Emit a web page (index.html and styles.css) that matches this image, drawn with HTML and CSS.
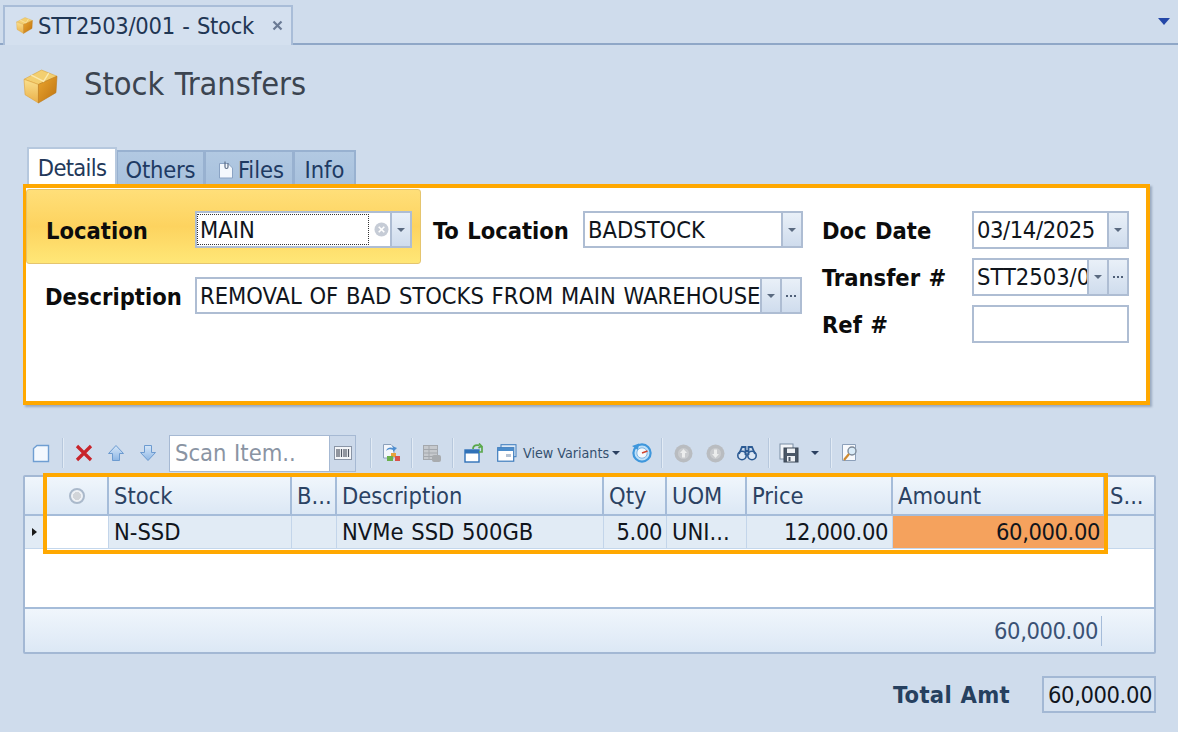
FILE: index.html
```html
<!DOCTYPE html>
<html lang="en">
<head>
<meta charset="utf-8">
<title>STT2503/001 - Stock</title>
<link rel="stylesheet" href="styles.css">
</head>
<body>
<svg class="defs" width="0" height="0" aria-hidden="true">
  <defs>
    <linearGradient id="boxL" x1="0" y1="0" x2="0" y2="1"><stop offset="0" stop-color="#fae08e"/><stop offset="1" stop-color="#eab049"/></linearGradient>
    <linearGradient id="boxR" x1="0" y1="0" x2="1" y2="1"><stop offset="0" stop-color="#eba62f"/><stop offset="1" stop-color="#bd7210"/></linearGradient>
    <linearGradient id="arrowBlue" x1="0" y1="0" x2="0" y2="1"><stop offset="0" stop-color="#d6e7f9"/><stop offset="1" stop-color="#8db6e4"/></linearGradient>
    <symbol id="box" viewBox="0 0 34 34">
      <path d="M1 10 L18 1 L33 7 L15 15 Z" fill="#f3cf70" stroke="#dba53d" stroke-width=".6" stroke-linejoin="round"/>
      <path d="M1 10 L15 15 L15 33 L2 25 Z" fill="url(#boxL)" stroke="#e0a23a" stroke-width=".6" stroke-linejoin="round"/>
      <path d="M15 15 L33 7 L32 23 L15 33 Z" fill="url(#boxR)" stroke="#bd7a1c" stroke-width=".6" stroke-linejoin="round"/>
      <path d="M8 6 L20 12 L25 4" stroke="#fbeab0" stroke-width="1.3" fill="none"/>
    </symbol>
  </defs>
</svg>

<header class="doc-strip">
  <div class="doc-tab">
    <svg class="doc-tab-icon" width="17" height="17"><use href="#box"/></svg>
    <span class="doc-tab-title">STT2503/001 - Stock</span>
    <svg class="doc-tab-close" width="11" height="11" viewBox="0 0 11 11"><path d="M1.5 1.5 L9.5 9.5 M9.5 1.5 L1.5 9.5" stroke="#6a7a94" stroke-width="2.2"/></svg>
  </div>
  <span class="strip-menu"></span>
</header>

<main class="page">
  <div class="title-row">
    <svg class="title-icon" width="35" height="35"><use href="#box"/></svg>
    <h1 class="title">Stock Transfers</h1>
  </div>

  <nav class="sub-tabs">
    <span class="sub-tab sub-tab-active">Details</span>
    <span class="sub-tab sub-tab-others">Others</span>
    <span class="sub-tab sub-tab-files">
      <svg width="16" height="19" viewBox="0 0 16 19"><path d="M1.5 3.5 H10 L14.5 8 V18 H1.5 Z" fill="#f4f8fd" stroke="#8aa3c4"/><path d="M7 1.5 V7 a1.5 1.5 0 0 0 3 0 V3" fill="none" stroke="#5e6f88" stroke-width="1.2"/></svg>
      Files
    </span>
    <span class="sub-tab sub-tab-info">Info</span>
  </nav>

  <section class="form-panel">
    <div class="form-left">
      <div class="form-row-top">
        <div class="focus-band">
          <label class="form-label label-loc">Location</label>
          <div class="field field-location">
            <span class="field-text field-focused">MAIN</span>
            <svg class="clear-icon" width="15" height="15" viewBox="0 0 15 15"><circle cx="7.5" cy="7.5" r="7" fill="#c6ccd6"/><path d="M4.7 4.7 L10.3 10.3 M10.3 4.7 L4.7 10.3" stroke="#fff" stroke-width="1.6"/></svg>
            <span class="field-btn"><i class="caret"></i></span>
          </div>
        </div>
        <label class="form-label label-to">To Location</label>
        <div class="field field-to">
          <span class="field-text">BADSTOCK</span>
          <span class="field-btn"><i class="caret"></i></span>
        </div>
      </div>
      <div class="form-row-desc">
        <label class="form-label label-desc">Description</label>
        <div class="field field-desc">
          <span class="field-text">REMOVAL OF BAD STOCKS FROM MAIN WAREHOUSE</span>
          <span class="field-btn"><i class="caret"></i></span>
          <span class="field-btn field-btn-dots"><i class="dots"></i></span>
        </div>
      </div>
    </div>
    <div class="form-right">
      <label class="form-label">Doc Date</label>
      <div class="field">
        <span class="field-text field-date">03/14/2025</span>
        <span class="field-btn"><i class="caret"></i></span>
      </div>
      <label class="form-label">Transfer #</label>
      <div class="field">
        <span class="field-text">STT2503/001</span>
        <span class="field-btn"><i class="caret"></i></span>
        <span class="field-btn field-btn-dots"><i class="dots"></i></span>
      </div>
      <label class="form-label">Ref #</label>
      <div class="field"></div>
    </div>
  </section>

  <div class="toolbar">
    <span class="tb tb-new"><svg width="18" height="19" viewBox="0 0 18 19"><path d="M1.5 4.5 L5 1.5 H16.5 V17.5 H1.5 Z" fill="#f3f8fe" stroke="#6f9ed2" stroke-width="1.4"/></svg></span>
    <i class="sep sep-a"></i>
    <span class="tb"><svg width="20" height="20" viewBox="0 0 20 20"><path d="M3 3 L17 17 M17 3 L3 17" stroke="#c8242b" stroke-width="3.2"/></svg></span>
    <span class="tb tb-up"><svg width="18" height="18" viewBox="0 0 18 18"><path d="M9 1.5 L16.5 9.5 H12.5 V16.5 H5.5 V9.5 H1.5 Z" fill="url(#arrowBlue)" stroke="#6c9bd0"/></svg></span>
    <span class="tb tb-down"><svg width="18" height="18" viewBox="0 0 18 18"><path d="M9 16.5 L16.5 8.5 H12.5 V1.5 H5.5 V8.5 H1.5 Z" fill="url(#arrowBlue)" stroke="#6c9bd0"/></svg></span>
    <div class="scan">
      <span class="scan-text">Scan Item..</span>
      <span class="scan-btn"><svg width="18" height="14" viewBox="0 0 18 14"><rect x=".5" y=".5" width="17" height="13" fill="#f4f6f9" stroke="#8a95a6"/><path d="M3 3 V11 M5 3 V11 M7.5 3 V11 M10 3 V11 M12 3 V11 M14.5 3 V11" stroke="#4f5663" stroke-width="1.2"/></svg></span>
    </div>
    <i class="sep sep-b"></i>
    <span class="tb tb-sm"><svg width="20" height="20" viewBox="0 0 20 20"><path d="M2.5 1.5 H10 L13 4.5 V15 H2.5 Z" fill="#f3f6fb" stroke="#8ca0ba"/><path d="M5 8 C6 4 10 4 12 5 L11 3 L16 5 L12 9 L12 7 C10 6 7 6 5 8Z" fill="#4e8ed0"/><rect x="10" y="10" width="5" height="4" fill="#e8a23a"/><rect x="14" y="13" width="5" height="5" fill="#d9534a"/><rect x="6" y="13" width="6" height="5" fill="#6ab04c"/></svg></span>
    <i class="sep sep-c"></i>
    <span class="tb tb-sm"><svg width="20" height="20" viewBox="0 0 20 20"><rect x="1.5" y="2.5" width="14" height="14" fill="#c6c9cd" stroke="#a4a8ad"/><path d="M2 6.5 H15 M2 10 H15 M2 13.5 H15 M7 3 V16" stroke="#a4a8ad"/><rect x="10" y="12" width="9" height="7" rx="2" fill="#a8abae"/></svg></span>
    <i class="sep sep-d"></i>
    <span class="tb tb-sm"><svg width="20" height="20" viewBox="0 0 20 20"><rect x="1" y="7" width="14" height="12" fill="#fff" stroke="#2f71b8" stroke-width="1.4"/><rect x="1" y="7" width="14" height="3.5" fill="#2f71b8"/><path d="M9 6 C9 2 13 1.5 15.5 2.5 M15 0.5 L17.5 3 L14.5 5 M18 3 V9 H15" fill="none" stroke="#5aa84a" stroke-width="1.7"/></svg></span>
    <span class="tb-variants">
      <svg width="20" height="18" viewBox="0 0 20 18"><rect x="4" y=".7" width="15" height="12" fill="#dbe8f6" stroke="#3e7cbd"/><rect x=".7" y="3.7" width="16" height="13.5" fill="#fff" stroke="#3e7cbd" stroke-width="1.2"/><rect x="1" y="4" width="15.4" height="3" fill="#4b8ccb"/><rect x="9" y="10" width="5" height="3" fill="#b5c3d4"/></svg>
      <span class="tb-label">View Variants</span>
      <i class="caret caret-dark"></i>
    </span>
    <span class="tb tb-gauge"><svg width="22" height="22" viewBox="0 0 22 22"><circle cx="11" cy="11" r="8.6" fill="#bfe0f8" stroke="#3f97dc" stroke-width="2.2"/><circle cx="11" cy="11" r="5.2" fill="#f4f8fc" stroke="#7fb4e2"/><path d="M11 11 L16.5 9" stroke="#d0442f" stroke-width="1.5"/><path d="M1 4 L8 1.5 L7 8 Z" fill="#3f97dc"/></svg></span>
    <i class="sep sep-e"></i>
    <span class="tb tb-round"><svg width="19" height="19" viewBox="0 0 19 19"><circle cx="9.5" cy="9.5" r="9" fill="#b9bcc0"/><circle cx="9.5" cy="9.5" r="5.5" fill="#c9cbce"/><path d="M9.5 5 L13 9 H11 V13.5 H8 V9 H6 Z" fill="#eceded"/></svg></span>
    <span class="tb tb-round"><svg width="19" height="19" viewBox="0 0 19 19"><circle cx="9.5" cy="9.5" r="9" fill="#b9bcc0"/><circle cx="9.5" cy="9.5" r="5.5" fill="#c9cbce"/><path d="M9.5 14 L13 10 H11 V5.5 H8 V10 H6 Z" fill="#eceded"/></svg></span>
    <span class="tb tb-bino"><svg width="20" height="16" viewBox="0 0 20 16"><circle cx="5" cy="10.5" r="4.2" fill="#dce7f4" stroke="#2c5b94" stroke-width="1.6"/><circle cx="15" cy="10.5" r="4.2" fill="#dce7f4" stroke="#2c5b94" stroke-width="1.6"/><path d="M2 9 L5 2 H8.5 V10 M18 9 L15 2 H11.5 V10 M8 6 H12" fill="none" stroke="#2c5b94" stroke-width="1.8"/></svg></span>
    <i class="sep sep-f"></i>
    <span class="tb tb-sm"><svg width="20" height="20" viewBox="0 0 20 20"><rect x="1" y="1" width="13" height="15" fill="#f2f5f9" stroke="#7b8da3"/><rect x="5" y="5" width="14" height="14" fill="#4a5767" stroke="#3b4654"/><rect x="8" y="5.5" width="8" height="4.5" fill="#eef1f5"/><rect x="8" y="13" width="8" height="5.5" fill="#eef1f5"/><rect x="9.5" y="14" width="2" height="4" fill="#4a5767"/></svg></span>
    <i class="caret caret-dark caret-save"></i>
    <i class="sep sep-g"></i>
    <span class="tb tb-sm"><svg width="20" height="20" viewBox="0 0 20 20"><path d="M2.5 1.5 H15.5 V17.5 H2.5 Z" fill="#f7f9fc" stroke="#8ca0ba"/><circle cx="12" cy="8" r="4" fill="#d9ebf8" stroke="#7d8a99" stroke-width="1.4"/><path d="M9 11 L4 17" stroke="#cf8a2f" stroke-width="2.2"/></svg></span>
  </div>

  <section class="grid-wrap">
    <div class="grid">
      <div class="grid-row grid-head">
        <div class="c c-ind"></div>
        <div class="c c-chk"><span class="radio"></span></div>
        <div class="c c-stock">Stock</div>
        <div class="c c-b">B...</div>
        <div class="c c-desc">Description</div>
        <div class="c c-qty">Qty</div>
        <div class="c c-uom">UOM</div>
        <div class="c c-price">Price</div>
        <div class="c c-amt">Amount</div>
        <div class="c c-s">S...</div>
      </div>
      <div class="grid-row grid-data">
        <div class="c c-ind"><i class="row-mark"></i></div>
        <div class="c c-chk c-white"></div>
        <div class="c c-stock">N-SSD</div>
        <div class="c c-b"></div>
        <div class="c c-desc">NVMe SSD 500GB</div>
        <div class="c c-qty num">5.00</div>
        <div class="c c-uom">UNI...</div>
        <div class="c c-price num">12,000.00</div>
        <div class="c c-amt num c-orange">60,000.00</div>
        <div class="c c-s c-tail"></div>
      </div>
      <div class="grid-empty"></div>
      <div class="grid-foot">
        <span class="foot-value num">60,000.00</span>
        <i class="foot-rule"></i>
      </div>
    </div>
    <div class="highlight"></div>
  </section>

  <div class="total-row">
    <span class="total-label">Total Amt</span>
    <span class="total-value num">60,000.00</span>
  </div>
</main>
</body>
</html>
```

FILE: styles.css
```css
* { box-sizing: border-box; }
html, body { margin: 0; padding: 0; }
body {
  width: 1178px;
  height: 732px;
  overflow: hidden;
  background: #cfdcec;
  font-family: "DejaVu Sans Condensed", "DejaVu Sans", "Noto Sans", sans-serif;
  font-stretch: condensed;
  font-size: 23.5px;
  word-spacing: 1px;
  color: #111;
}
.defs { position: absolute; }

/* document tab strip */
.doc-strip {
  height: 45px;
  padding: 5px 0 0 3px;
  border-bottom: 2px solid #8fa7c7;
  display: flex;
  background: #cfdcec;
  position: relative;
}
.doc-tab {
  width: 290px;
  height: 40px;
  display: flex;
  align-items: center;
  padding-left: 11px;
  border: 2px solid #a9bdd8;
  border-bottom: none;
  background: #d4e0ef;
  color: #1f3654;
}
.doc-tab-icon { flex: none; margin-top: -2px; }
.doc-tab-title { margin-left: 5px; white-space: nowrap; letter-spacing: -.3px; }
.doc-tab-close { margin-left: auto; margin-right: 8px; margin-top: -1px; flex: none; }
.strip-menu {
  position: absolute;
  right: 8px;
  top: 18px;
  border: 6px solid transparent;
  border-top: 7px solid #2447a8;
  border-bottom: none;
}

.page { padding: 0 22px 0 23px; }

/* title */
.title-row {
  height: 80px;
  display: flex;
  align-items: center;
  padding-bottom: 3px;
}
.title-icon { flex: none; margin-top: 5px; }
.title {
  margin: 0 0 0 26px;
  font-size: 32.3px;
  font-weight: 400;
  color: #3b4450;
  white-space: nowrap;
}

/* sub tabs */
.sub-tabs {
  height: 38px;
  margin-top: 22px;
  padding-left: 4px;
  display: flex;
  align-items: flex-end;
  color: #1e3a63;
}
.sub-tab {
  height: 35px;
  display: flex;
  align-items: center;
  justify-content: center;
  gap: 4px;
  padding-top: 2px;
  background: linear-gradient(#b2c9e2, #a8c1dd);
  border: 2px solid #98b1d0;
  border-left-width: 1px;
  border-bottom: none;
  white-space: nowrap;
}
.sub-tab-active {
  width: 90px;
  height: 38px;
  background: #fff;
  border: 2px solid #b6c8de;
  border-bottom: none;
  color: #23395a;
  letter-spacing: -.7px;
}
.sub-tab-others { width: 88px; letter-spacing: -.2px; }
.sub-tab-files { width: 89px; padding-left: 4px; }
.sub-tab-info { width: 62px; }

/* form */
.form-panel {
  width: 1127px;
  height: 221px;
  margin-top: -1px;
  position: relative;
  display: flex;
  background: #fff;
  border-style: solid;
  border-color: #ffa800;
  border-width: 4px 4px 4px 3px;
  box-shadow: 2px 2px 2px rgba(90, 110, 140, .45);
}
.form-left { width: 776px; flex: none; }
.form-row-top { display: flex; align-items: flex-start; height: 76px; padding-top: 1px; }
.focus-band {
  width: 395px;
  height: 75px;
  flex: none;
  display: flex;
  align-items: flex-start;
  padding: 21px 0 0 19px;
  border: 1px solid #e5c56e;
  border-radius: 3px;
  background: linear-gradient(#ffdf79, #fdd35f 50%, #ffe777);
}
.form-label { font-weight: 700; white-space: nowrap; color: #0c0c0c; }
.label-loc { width: 149px; flex: none; margin-top: 6px; }
.label-to { margin: 28px 0 0 12px; width: 150px; flex: none; }
.label-desc { width: 150px; flex: none; margin-left: 19px; padding-top: 2px; }
.form-row-desc { display: flex; align-items: center; margin-top: 13px; }

.field {
  height: 38px;
  display: flex;
  align-items: stretch;
  border: 2px solid #aebdd3;
  background: #fff;
  min-width: 0;
}
.field-location { width: 217px; height: 37px; flex: none; }
.field-to { width: 220px; height: 37px; flex: none; margin-top: 22px; }
.field-desc { width: 607px; height: 37px; flex: none; }
.field-text {
  flex: 1;
  min-width: 0;
  overflow: hidden;
  white-space: nowrap;
  padding: 0 3px;
  line-height: 35px;
  color: #10151c;
}
.field-date { letter-spacing: -.4px; }
.field-focused {
  outline: 1px dotted #333;
  outline-offset: -1px;
  margin: 1px 0;
  line-height: 33px;
  padding-left: 3px;
}
.clear-icon { align-self: center; flex: none; margin: 0 1px 0 5px; }
.field-btn {
  width: 20px;
  flex: none;
  display: flex;
  align-items: center;
  justify-content: center;
  border-left: 2px solid #aebdd3;
  background: linear-gradient(#e9f0f8, #cfdced);
}
.caret {
  display: block;
  border: 4px solid transparent;
  border-top: 4px solid #5a6a80;
  border-bottom: none;
}
.caret-dark { border-top-color: #2c4060; }
.dots {
  display: block;
  width: 10px;
  height: 2px;
  background: radial-gradient(circle at 1px 1px, #4f5f78 1px, transparent 1px) 0 0 / 4px 2px repeat-x;
}

.form-right {
  flex: 1;
  margin-left: 20px;
  padding-top: 23px;
  display: grid;
  grid-template-columns: 150px 157px;
  grid-auto-rows: 38px;
  row-gap: 9px;
  align-items: center;
}
.form-right .form-label { padding-top: 2px; }

/* toolbar */
.toolbar {
  height: 38px;
  margin-top: 29px;
  padding-left: 5px;
  display: flex;
  align-items: center;
}
.tb {
  width: 26px;
  height: 38px;
  flex: none;
  display: flex;
  align-items: center;
  justify-content: center;
}
.tb-up { margin-left: 6px; }
.tb-down { margin-left: 6px; }
.tb-sm { width: 20px; }
.tb-gauge { width: 24px; margin-left: 10px; }
.tb-round { width: 24px; margin-right: 8px; }
.tb-bino { width: 24px; margin-left: 0; }
.sep {
  display: block;
  width: 1px;
  height: 30px;
  flex: none;
  background: #b7c8dd;
  box-shadow: 1px 0 0 #e2ebf5;
}
.sep-a { margin: 0 8px; width: 1px; }
.sep-b { margin: 0 10px 0 14px; }
.sep-c { margin: 0 10px 0 10px; }
.sep-d { margin: 0 11px 0 10px; }
.sep-e { margin: 0 9px 0 7px; }
.sep-f { margin: 0 10px 0 9px; }
.sep-g { margin: 0 9px 0 11px; }
.caret-save { margin-left: 12px; }

.scan {
  width: 187px;
  height: 37px;
  margin-left: 8px;
  display: flex;
  flex: none;
  border: 1px solid #a6b9d3;
  background: #fff;
}
.scan-text { flex: 1; padding-left: 5px; line-height: 35px; color: #8a94a3; white-space: nowrap; }
.scan-btn {
  width: 26px;
  display: flex;
  align-items: center;
  justify-content: center;
  border-left: 1px solid #a6b9d3;
  background: #ccd9ea;
}
.tb-variants {
  display: flex;
  align-items: center;
  margin-left: 13px;
  flex: none;
  color: #34506f;
}
.tb-label { margin: 0 3px 0 6px; font-size: 14.2px; word-spacing: 0; white-space: nowrap; }

/* grid */
.grid-wrap { position: relative; margin-top: 3px; width: 1133px; }
.grid {
  height: 179px;
  border: 2px solid #a3b8d4;
  border-radius: 2px;
  background: #fff;
  overflow: hidden;
}
.grid-row { display: flex; }
.grid-head {
  height: 39px;
  background: linear-gradient(#f0f6fc, #dce8f5);
  border-bottom: 2px solid #a5bcd9;
  color: #2b4263;
}
.grid-data {
  height: 33px;
  background: #e1ebf5;
  border-bottom: 1px solid #c4d7ec;
  color: #10151c;
}
.c {
  flex: none;
  display: flex;
  align-items: center;
  padding: 0 4px 0 5px;
  border-right: 1px solid #c3d5ea;
  white-space: nowrap;
  overflow: hidden;
}
.grid-head .c { border-right: 2px solid #a5bcd9; }
.c-ind { width: 20px; padding: 0 0 0 7px; }
.c-chk { width: 64px; justify-content: center; }
.c-stock { width: 183px; }
.c-b { width: 45px; }
.c-desc { width: 267px; }
.c-qty { width: 63px; }
.c-uom { width: 80px; }
.c-price { width: 146px; }
.c-amt { width: 212px; }
.c-s { flex: 1; border-right: none; }
.grid-head .c-s { border-right: none; }
.num { justify-content: flex-end; letter-spacing: -.4px; }
.c-white { background: #fff; }
.c-orange { background: #f5a25d; }
.c-tail { background: #e1ebf5; }
.radio {
  width: 16px;
  height: 16px;
  border-radius: 50%;
  border: 2px solid #aab9cb;
  background: radial-gradient(#d2d5d9 45%, #eef1f5 50%);
}
.row-mark {
  display: block;
  border: 4px solid transparent;
  border-left: 5px solid #1a1a1a;
  border-right: none;
}
.grid-empty { height: 60px; border-bottom: 2px solid #a5bcd9; }
.grid-foot {
  height: 43px;
  display: flex;
  align-items: center;
  justify-content: flex-end;
  padding-right: 52px;
  background: linear-gradient(#f0f6fc, #dce8f5);
  color: #3a5275;
}
.foot-rule {
  display: block;
  width: 1px;
  height: 30px;
  margin-left: 3px;
  background: #a5bcd9;
}
.highlight {
  position: absolute;
  left: 20px;
  top: -2px;
  width: 1065px;
  height: 81px;
  border: 4px solid #ffa800;
  pointer-events: none;
}

/* total */
.total-row {
  display: flex;
  justify-content: flex-end;
  align-items: center;
  width: 1133px;
  margin-top: 22px;
}
.total-label { font-weight: 700; color: #26405f; margin-right: 32px; letter-spacing: .3px; }
.total-value {
  width: 114px;
  height: 37px;
  display: flex;
  align-items: center;
  justify-content: flex-end;
  padding-right: 2px;
  border: 2px solid #a3b8d4;
  background: #d6e2f0;
  color: #10151c;
}
```
